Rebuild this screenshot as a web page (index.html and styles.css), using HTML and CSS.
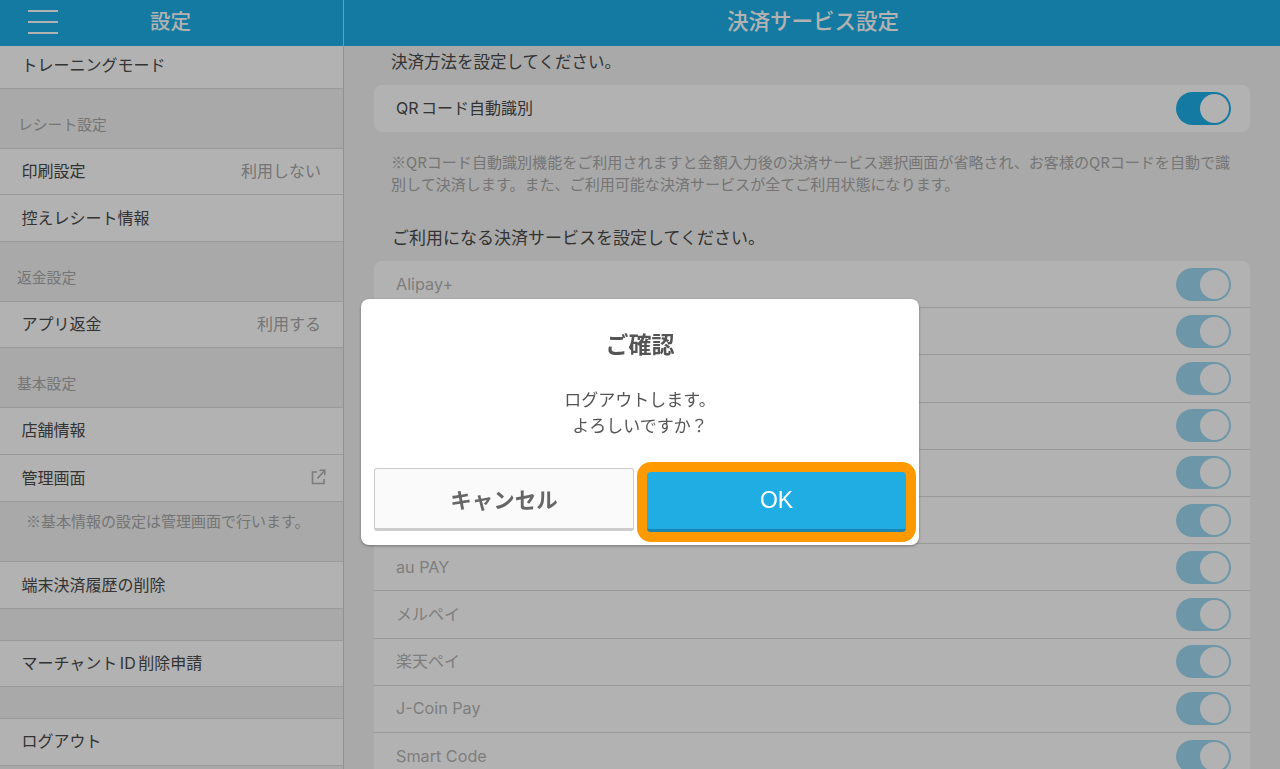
FILE: index.html
```html
<!DOCTYPE html>
<html lang="ja">
<head>
<meta charset="utf-8">
<title>決済サービス設定</title>
<link rel="stylesheet" href="styles.css">
</head>
<body>
<div class="page">
  <aside class="side">
    <header class="bar side-bar">
      <span class="burger"><i></i><i></i><i></i></span>
      <h1 class="side-title">設定</h1>
    </header>
    <div class="side-list">
      <div class="row row-first"><span>トレーニングモード</span></div>
      <div class="sec sec-a">レシート設定</div>
      <div class="row row-s"><span>印刷設定</span><em>利用しない</em></div>
      <div class="row"><span>控えレシート情報</span></div>
      <div class="sec sec-a sec-b">返金設定</div>
      <div class="row row-s"><span>アプリ返金</span><em>利用する</em></div>
      <div class="sec sec-a sec-b">基本設定</div>
      <div class="row row-up"><span>店舗情報</span></div>
      <div class="row"><span>管理画面</span>
        <svg class="ext" width="15" height="16" viewBox="0 0 15 16" fill="none" stroke="currentColor" stroke-width="1.6"><path d="M6 3H1.5v11.5H13V10"/><path d="M6.5 9.5L13.5 1.5M8.5 1.3h5.2v5"/></svg>
      </div>
      <div class="sec sec-note">※基本情報の設定は管理画面で行います。</div>
      <div class="row"><span>端末決済履歴の削除</span></div>
      <div class="sec sec-s"></div>
      <div class="row row-s"><span class="tight">マーチャント ID 削除申請</span></div>
      <div class="sec sec-s"></div>
      <div class="row row-up"><span>ログアウト</span></div>
    </div>
  </aside>
  <main class="main">
    <header class="bar main-bar"><h1 class="main-title">決済サービス設定</h1></header>
    <div class="content">
      <p class="lead lead-a">決済方法を設定してください。</p>
      <div class="card">
        <div class="item"><span class="tight">QR コード自動識別</span><b class="tog"></b></div>
      </div>
      <p class="note">※QRコード自動識別機能をご利用されますと金額入力後の決済サービス選択画面が省略され、お客様のQRコードを自動で識別して決済します。また、ご利用可能な決済サービスが全てご利用状態になります。</p>
      <p class="lead lead-b">ご利用になる決済サービスを設定してください。</p>
      <div class="card">
        <div class="item off"><span class="lat">Alipay+</span><b class="tog"></b></div>
        <div class="item off"><span></span><b class="tog"></b></div>
        <div class="item off"><span></span><b class="tog"></b></div>
        <div class="item off"><span></span><b class="tog"></b></div>
        <div class="item off"><span></span><b class="tog"></b></div>
        <div class="item off"><span></span><b class="tog"></b></div>
        <div class="item off"><span class="lat">au PAY</span><b class="tog"></b></div>
        <div class="item off"><span>メルペイ</span><b class="tog"></b></div>
        <div class="item off"><span>楽天ペイ</span><b class="tog"></b></div>
        <div class="item off"><span class="lat">J-Coin Pay</span><b class="tog"></b></div>
        <div class="item off"><span class="lat">Smart Code</span><b class="tog"></b></div>
      </div>
    </div>
  </main>
</div>
<div class="overlay"></div>
<div class="dialog">
  <h2 class="dlg-title">ご確認</h2>
  <p class="dlg-text">ログアウトします。<br>よろしいですか？</p>
  <div class="dlg-actions">
    <button class="btn btn-cancel">キャンセル</button>
    <span class="focus"><button class="btn btn-ok">OK</button></span>
  </div>
</div>
</body>
</html>
```
FILE: styles.css
```css
* { box-sizing: border-box; }
html, body { margin: 0; height: 769px; overflow: hidden; }
body { font-family: "Inter", "Noto Sans CJK JP", "Noto Sans", sans-serif; color: #4a4a4a; background: #f2f2f2; }
.page { display: flex; height: 769px; overflow: hidden; }
.bar { height: 46px; flex: none; background: #1dafe9; color: #fff; display: flex; align-items: center; padding-bottom: 2px; border-bottom: 1px solid #26b0e6; }
h1 { margin: 0; font-size: 21.5px; font-weight: 500; line-height: 1; }

.side { width: 344px; flex: none; display: flex; flex-direction: column; border-right: 1px solid #d0d0d0; }
.side-bar { position: relative; justify-content: center; padding-right: 2px; padding-bottom: 1px; }
.burger { position: absolute; left: 28px; top: 10px; width: 30px; display: flex; flex-direction: column; gap: 9px; }
.burger i { display: block; height: 2px; background: #fff; }
.side-title { font-size: 20.5px; }
.side-list { display: flex; flex-direction: column; }
.row { height: 47px; flex: none; background: #fff; border-bottom: 1px solid #dcdcdc; padding: 0 22px 2px 21.5px; display: flex; align-items: center; justify-content: space-between; font-size: 16px; color: #4a4a4a; }
.row-s { height: 46px; padding-bottom: 3px; }
.row-up { padding-bottom: 4px; }
.row-first { height: 43px; padding-bottom: 7px; }
.row em { font-style: normal; color: #a8a8a8; font-size: 16px; }
.tight { word-spacing: -2px; }
.ext { color: #b0b0b0; margin-right: -5px; }
.sec { background: #f2f2f2; border-bottom: 1px solid #dcdcdc; font-size: 14.8px; color: #a8a8a8; flex: none; }
.sec-a { height: 60px; padding: 26px 0 0 18px; line-height: 20px; }
.sec-b { padding-left: 17px; }
.sec-note { height: 60px; padding: 9px 0 0 26px; line-height: 20px; font-family: "Noto Sans CJK JP", sans-serif; font-size: 15px; }
.sec-s { height: 32px; }

.main { flex: 1; min-width: 0; display: flex; flex-direction: column; }
.main-bar { justify-content: center; padding-left: 2px; }
.content { padding: 5px 30px 0 30px; }
.lead { margin: 0; font-size: 16.5px; line-height: 22px; color: #4a4a4a; padding-left: 17px; }
.lead-a { height: 34px; }
.lead-b { margin-top: 32px; height: 34px; padding-left: 18px; font-size: 17px; }
.note { margin: 19px 0 0; padding: 0 17px; font-size: 15.05px; line-height: 22px; color: #a8a8a8; font-family: "Noto Sans CJK JP", sans-serif; }
.card { background: #fff; border-radius: 8px; overflow: hidden; }
.item { height: 47px; display: flex; align-items: center; justify-content: space-between; padding: 0 19px 0 22px; font-size: 16px; border-bottom: 1px solid #dcdcdc; color: #4a4a4a; }
.item span { margin-bottom: 3px; }
.item span.lat { margin-bottom: 1px; font-size: 16.2px; }
.item:last-child { border-bottom: 0; }
.item.off { color: #b5b5b5; height: 47.2px; }
.tog { position: relative; width: 55px; height: 33px; border-radius: 17px; background: #1dafe9; flex: none; }
.tog::after { content: ""; position: absolute; right: 2px; top: 2px; width: 29px; height: 29px; border-radius: 50%; background: #fff; }
.off .tog { background: #9dd9f2; }

.overlay { position: fixed; inset: 0; background: rgba(0, 0, 0, 0.3); }
.dialog { position: fixed; left: 361px; top: 299px; width: 558px; height: 246px; background: #fff; border-radius: 8px; box-shadow: 0 1px 3px rgba(0, 0, 0, 0.35); display: flex; flex-direction: column; align-items: center; }
.dlg-title { margin: 29px 0 0; font-size: 23px; line-height: 34px; font-weight: 700; color: #555; }
.dlg-text { margin: 24px 0 0; font-size: 17px; line-height: 26px; color: #555; text-align: center; font-family: "Noto Sans CJK JP", sans-serif; }
.dlg-actions { margin-top: 24px; align-self: stretch; padding: 0 3px 0 13px; display: flex; align-items: flex-start; gap: 3px; }
.btn { font-family: inherit; padding: 0; margin: 0; border: 0; }
.btn-cancel { width: 260px; height: 63px; margin-top: 6px; background: #fafafa; border: 1px solid #ccc; border-bottom-width: 3px; border-radius: 3px; font-size: 21.5px; font-weight: 700; color: #666; }
.focus { width: 279px; height: 80px; padding: 10px; background: #ff9900; border-radius: 14px; display: block; }
.btn-ok { display: block; width: 259px; height: 60px; background: #20ade3; border-bottom: 3px solid #1a86b4; border-radius: 4px; color: #fff; font-size: 23px; font-weight: 400; font-family: "Liberation Sans", sans-serif; }
```
